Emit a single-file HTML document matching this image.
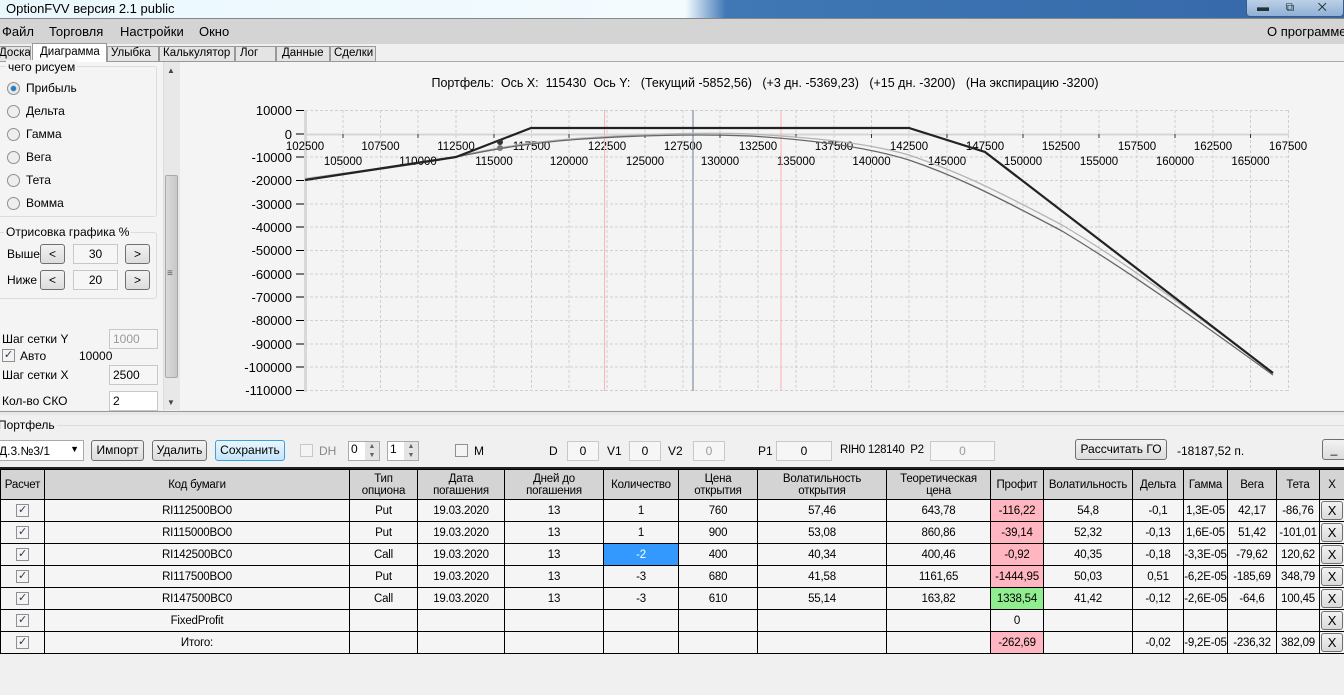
<!DOCTYPE html>
<html><head><meta charset="utf-8"><style>
*{box-sizing:border-box;margin:0;padding:0}
body{width:1344px;height:695px;overflow:hidden;background:#f0f0f0;font-family:"Liberation Sans",sans-serif;font-size:12px;color:#000;position:relative}
.a{position:absolute;white-space:nowrap}
.btn{position:absolute;border:1px solid #707070;border-radius:3px;background:linear-gradient(#f2f2f2,#dcdcdc);text-align:center;font-size:12px;line-height:18px;white-space:nowrap}
.box{position:absolute;border:1px solid #c8c8c8;background:#f6f6f6;text-align:center;font-size:12px}
.rad{position:absolute;width:13px;height:13px;border:1px solid #8e8f8f;border-radius:50%;background:#eee}
.cb{position:absolute;width:13px;height:13px;border:1px solid #8e8f8f;background:#f4f4f4;font-size:11px;line-height:11px;text-align:center;color:#335}
.tab{font-size:11.5px}
table{border-collapse:collapse;position:absolute;left:0;top:469px;width:1344px;table-layout:fixed;font-size:11.5px}
td{border:1px solid #000;text-align:center;height:22px;padding:0;background:#f5f5f5;overflow:hidden;white-space:nowrap;letter-spacing:-0.2px}
tr.h td{background:#d4d4d4;height:30px;line-height:12px}
.r{background:#ffb6c1!important}.g{background:#90ee90!important}
.x{display:inline-block;width:22px;height:19px;border:1px solid #707070;border-radius:3px;background:linear-gradient(#f2f2f2,#dadada);line-height:17px;font-size:13px}
</style></head><body>
<div class="a" style="left:0;top:0;width:1344px;height:18px;background:linear-gradient(90deg,#e9f8fd 0,#f4fbff 51%,#3f78b5 54%,#3567a8 100%)"></div>
<div class="a" style="left:6px;top:1px;font-size:13px">OptionFVV версия 2.1 public</div>
<div class="a" style="left:1246px;top:0;width:98px;height:17px;border:1px solid #3a5d87;border-top:none;border-radius:0 0 4px 4px;background:linear-gradient(#bcd0e6,#8fb0d6)"></div>
<div class="a" style="left:1257px;top:0;color:#233;font-size:12px">▬&nbsp;&nbsp;&nbsp;&nbsp;&nbsp;⧉&nbsp;&nbsp;&nbsp;&nbsp;&nbsp;&nbsp;&nbsp;✕</div>
<div class="a" style="left:0;top:18px;width:1344px;height:26px;background:#d4d4d4;border-top:1px solid #888"></div>
<div class="a" style="left:2px;top:24px;font-size:13px">Файл</div>
<div class="a" style="left:49px;top:24px;font-size:13px">Торговля</div>
<div class="a" style="left:120px;top:24px;font-size:13px">Настройки</div>
<div class="a" style="left:199px;top:24px;font-size:13px">Окно</div>
<div class="a" style="left:1267px;top:24px;font-size:13px">О программе</div>
<div class="a" style="left:0;top:61px;width:1344px;height:1px;background:#aaa"></div>
<div class="a tab" style="left:-8px;top:46px;width:39px;height:16px;border:1px solid #999;background:#e4e4e4;padding-left:6px;overflow:hidden">Доска</div>
<div class="a tab" style="left:32px;top:43px;width:75px;height:20px;border:1px solid #999;border-bottom:none;background:#fff;padding-left:7px;padding-top:2px">Диаграмма</div>
<div class="a tab" style="left:107px;top:46px;width:52px;height:16px;border:1px solid #999;background:#e4e4e4;padding-left:3px">Улыбка</div>
<div class="a tab" style="left:159px;top:46px;width:76px;height:16px;border:1px solid #999;background:#e4e4e4;padding-left:3px;overflow:hidden">Калькулятор</div>
<div class="a tab" style="left:235px;top:46px;width:41px;height:16px;border:1px solid #999;background:#e4e4e4;padding-left:4px">Лог</div>
<div class="a tab" style="left:276px;top:46px;width:54px;height:16px;border:1px solid #999;background:#e4e4e4;padding-left:5px">Данные</div>
<div class="a tab" style="left:330px;top:46px;width:46px;height:16px;border:1px solid #999;background:#e4e4e4;padding-left:3px">Сделки</div>
<div class="a" style="left:0;top:62px;width:163px;height:348px;background:#f4f4f4"></div>
<div class="a" style="left:-3px;top:66px;width:160px;height:151px;border:1px solid #dcdcdc;border-radius:3px"></div>
<div class="a" style="left:6px;top:60px;background:#f4f4f4;padding:0 2px">чего рисуем</div>
<div class="rad" style="left:7px;top:82px;background:radial-gradient(#2a7fc0 30%,#e8e8e8 40%)"></div><div class="a" style="left:26px;top:81px">Прибыль</div>
<div class="rad" style="left:7px;top:105px"></div><div class="a" style="left:26px;top:104px">Дельта</div>
<div class="rad" style="left:7px;top:128px"></div><div class="a" style="left:26px;top:127px">Гамма</div>
<div class="rad" style="left:7px;top:151px"></div><div class="a" style="left:26px;top:150px">Вега</div>
<div class="rad" style="left:7px;top:174px"></div><div class="a" style="left:26px;top:173px">Тета</div>
<div class="rad" style="left:7px;top:197px"></div><div class="a" style="left:26px;top:196px">Вомма</div>
<div class="a" style="left:-3px;top:232px;width:160px;height:67px;border:1px solid #dcdcdc;border-radius:3px"></div>
<div class="a" style="left:4px;top:225px;background:#f4f4f4;padding:0 2px">Отрисовка графика %</div>
<div class="a" style="left:7px;top:247px">Выше</div>
<div class="btn" style="left:40px;top:244px;width:25px;height:20px">&lt;</div>
<div class="box" style="left:73px;top:244px;width:45px;height:20px;line-height:18px">30</div>
<div class="btn" style="left:125px;top:244px;width:25px;height:20px">&gt;</div>
<div class="a" style="left:7px;top:273px">Ниже</div>
<div class="btn" style="left:40px;top:270px;width:25px;height:20px">&lt;</div>
<div class="box" style="left:73px;top:270px;width:45px;height:20px;line-height:18px">20</div>
<div class="btn" style="left:125px;top:270px;width:25px;height:20px">&gt;</div>
<div class="a" style="left:2px;top:332px">Шаг сетки Y</div>
<div class="box" style="left:109px;top:329px;width:49px;height:20px;line-height:18px;text-align:left;padding-left:3px;color:#999">1000</div>
<div class="cb" style="left:2px;top:349px">✓</div><div class="a" style="left:20px;top:349px">Авто</div><div class="a" style="left:79px;top:349px">10000</div>
<div class="a" style="left:2px;top:368px">Шаг сетки X</div>
<div class="box" style="left:109px;top:365px;width:49px;height:20px;line-height:18px;text-align:left;padding-left:3px">2500</div>
<div class="a" style="left:2px;top:394px">Кол-во СКО</div>
<div class="box" style="left:109px;top:391px;width:49px;height:20px;line-height:18px;text-align:left;padding-left:3px;background:#fff">2</div>
<div class="a" style="left:163px;top:62px;width:17px;height:348px;background:#e8e8e8;border-left:1px solid #ddd"></div>
<div class="a" style="left:165px;top:175px;width:13px;height:203px;background:linear-gradient(90deg,#dadada,#c8c8c8);border:1px solid #aaa;border-radius:2px"></div>
<div class="a" style="left:167px;top:268px;font-size:10px;color:#555">≡</div>
<div class="a" style="left:167px;top:66px;font-size:8px;color:#444">▲</div>
<div class="a" style="left:167px;top:398px;font-size:8px;color:#444">▼</div>
<div class="a" style="left:180px;top:62px;width:1164px;height:348px;background:#f4f4f4"></div>
<div class="a" style="left:180px;top:76px;width:1164px;text-align:center;font-size:12.5px;padding-left:6px">Портфель:&nbsp; Ось X:&nbsp; 115430&nbsp; Ось Y:&nbsp;&nbsp; (Текущий -5852,56)&nbsp;&nbsp; (+3 дн. -5369,23)&nbsp;&nbsp; (+15 дн. -3200)&nbsp;&nbsp; (На экспирацию -3200)</div>
<svg class="a" style="left:0;top:0" width="1344" height="420" font-family="Liberation Sans" font-size="12">
<g stroke="#cfcfcf" stroke-dasharray="3,2" stroke-width="1">
<path d="M305 110.5H1289M305 134H1289M305 157H1289M305 180.5H1289M305 204H1289M305 227H1289M305 250.5H1289M305 274H1289M305 297H1289M305 320.5H1289M305 344H1289M305 367H1289M305 390.5H1289"/>
<path d="M343 110V391M380.5 110V391M418 110V391M456 110V391M494 110V391M531.5 110V391M569 110V391M607 110V391M645 110V391M683 110V391M720 110V391M758 110V391M796 110V391M834 110V391M871.5 110V391M909 110V391M947 110V391M985 110V391M1023 110V391M1061 110V391M1099 110V391M1137 110V391M1175 110V391M1213 110V391M1250.5 110V391M1288.5 110V391"/>
</g>
<path d="M305.5 110V392" stroke="#d8d8d8" stroke-width="3"/>
<path d="M305 134.5H1289" stroke="#d6d6d6" stroke-width="2"/>
<g stroke="#000"><path d="M296 110.5h8M296 134h8M296 157h8M296 180.5h8M296 204h8M296 227h8M296 250.5h8M296 274h8M296 297h8M296 320.5h8M296 344h8M296 367h8M296 390.5h8"/></g>
<g stroke="#333"><path d="M343 134v4M418 134v4M494 134v4M569 134v4M645 134v4M720 134v4M796 134v4M871.5 134v4M947 134v4M1023 134v4M1099 134v4M1175 134v4M1250.5 134v4"/></g>
<g text-anchor="end" font-size="13">
<text x="292" y="115">10000</text><text x="292" y="139">0</text><text x="292" y="162">-10000</text><text x="292" y="185">-20000</text><text x="292" y="209">-30000</text><text x="292" y="232">-40000</text><text x="292" y="255">-50000</text><text x="292" y="279">-60000</text><text x="292" y="302">-70000</text><text x="292" y="325">-80000</text><text x="292" y="349">-90000</text><text x="292" y="372">-100000</text><text x="292" y="395">-110000</text>
</g>
<g text-anchor="middle" font-size="11.5">
<text x="305" y="150">102500</text><text x="380.5" y="150">107500</text><text x="456" y="150">112500</text><text x="531.5" y="150">117500</text><text x="607" y="150">122500</text><text x="683" y="150">127500</text><text x="758" y="150">132500</text><text x="834" y="150">137500</text><text x="909" y="150">142500</text><text x="985" y="150">147500</text><text x="1061" y="150">152500</text><text x="1137" y="150">157500</text><text x="1213" y="150">162500</text><text x="1288" y="150">167500</text>
<text x="343" y="165">105000</text><text x="418" y="165">110000</text><text x="494" y="165">115000</text><text x="569" y="165">120000</text><text x="645" y="165">125000</text><text x="720" y="165">130000</text><text x="796" y="165">135000</text><text x="871.5" y="165">140000</text><text x="947" y="165">145000</text><text x="1023" y="165">150000</text><text x="1099" y="165">155000</text><text x="1175" y="165">160000</text><text x="1250.5" y="165">165000</text>
</g>
<path d="M604.5 110V391M781 110V391" stroke="#ffb0b8" stroke-width="1"/>
<path d="M693 110V391" stroke="#8a98aa" stroke-width="1.3"/>
<path d="M305 178.5C360 171 420 163 456 156.5C500 147 540 140 600 137C650 134 700 132 750 134C800 137 860 141 909 155C950 169 985 184 1062 225C1130 265 1200 318 1273 373" fill="none" stroke="#b4b4b4" stroke-width="1.3"/>
<path d="M305 180C360 172 420 164 456 157C500 148 540 141 600 138C650 135 700 134 750 136C800 139 860 145 909 160C950 174 985 190 1062 231C1130 272 1200 322 1273 375" fill="none" stroke="#666" stroke-width="1.3"/>
<path d="M305 180L456 157L531 128H909L985 152L1273 373" fill="none" stroke="#222" stroke-width="2.2"/>
<circle cx="500" cy="142" r="3" fill="#333"/><circle cx="500" cy="148" r="3" fill="#777"/>
</svg>
<div class="a" style="left:0;top:411px;width:1344px;height:4px;border-top:1px solid #999;background:#e8e8e8"></div>
<div class="a" style="left:-3px;top:425px;width:1350px;height:46px;border:1px solid #dcdcdc;border-radius:3px"></div>
<div class="a" style="left:-4px;top:418px;background:#f0f0f0;padding:0 2px">Портфель</div>
<div class="a" style="left:-2px;top:440px;width:86px;height:21px;border:1px solid #aaa;background:#fff;padding:3px 0 0 0">Д.3.№3/1<span style="position:absolute;right:4px;top:3px;font-size:9px">▼</span></div>
<div class="btn" style="left:91px;top:440px;width:53px;height:21px">Импорт</div>
<div class="btn" style="left:152px;top:440px;width:55px;height:21px">Удалить</div>
<div class="btn" style="left:215px;top:440px;width:70px;height:21px;border-color:#3c9fe0;background:linear-gradient(#e9f6fd,#c4e5f8)">Сохранить</div>
<div class="cb" style="left:300px;top:444px;border-color:#c8c8c8"></div><div class="a" style="left:319px;top:444px;color:#888">DH</div>
<div class="box" style="left:348px;top:441px;width:32px;height:20px;text-align:left;padding-left:2px;background:#fff;border-color:#aaa">0</div><div class="a" style="left:365px;top:442px;width:14px;height:18px;background:#e4e4e4;font-size:7px;line-height:9px;text-align:center;color:#567">▲<br>▼</div>
<div class="box" style="left:387px;top:441px;width:32px;height:20px;text-align:left;padding-left:2px;background:#fff;border-color:#aaa">1</div><div class="a" style="left:404px;top:442px;width:14px;height:18px;background:#e4e4e4;font-size:7px;line-height:9px;text-align:center;color:#567">▲<br>▼</div>
<div class="cb" style="left:455px;top:444px"></div><div class="a" style="left:474px;top:444px">M</div>
<div class="a" style="left:549px;top:444px">D</div><div class="box" style="left:567px;top:441px;width:32px;height:20px;line-height:18px">0</div>
<div class="a" style="left:607px;top:444px">V1</div><div class="box" style="left:629px;top:441px;width:32px;height:20px;line-height:18px">0</div>
<div class="a" style="left:668px;top:444px">V2</div><div class="box" style="left:693px;top:441px;width:32px;height:20px;line-height:18px;color:#999">0</div>
<div class="a" style="left:758px;top:444px">P1</div><div class="box" style="left:776px;top:441px;width:56px;height:20px;line-height:18px">0</div>
<div class="a" style="left:840px;top:444px;font-size:11.5px;letter-spacing:-0.3px">RIH0 128140&nbsp; P2</div><div class="box" style="left:930px;top:441px;width:65px;height:20px;line-height:18px;color:#999">0</div>
<div class="btn" style="left:1075px;top:439px;width:92px;height:21px">Рассчитать ГО</div>
<div class="a" style="left:1177px;top:444px">-18187,52 п.</div>
<div class="btn" style="left:1322px;top:439px;width:24px;height:21px">_</div>
<div class="a" style="left:0;top:467px;width:1344px;height:2px;background:#222"></div>
<table>
<colgroup><col style="width:44px"><col style="width:305px"><col style="width:68px"><col style="width:87px"><col style="width:99px"><col style="width:75px"><col style="width:79px"><col style="width:129px"><col style="width:104px"><col style="width:53px"><col style="width:89px"><col style="width:51px"><col style="width:44px"><col style="width:49px"><col style="width:43px"><col style="width:25px"></colgroup>
<tr class="h"><td>Расчет</td><td>Код бумаги</td><td>Тип<br>опциона</td><td>Дата<br>погашения</td><td>Дней до<br>погашения</td><td>Количество</td><td>Цена<br>открытия</td><td>Волатильность<br>открытия</td><td>Теоретическая<br>цена</td><td>Профит</td><td>Волатильность</td><td>Дельта</td><td>Гамма</td><td>Вега</td><td>Тета</td><td>X</td></tr>
<tr><td><span class="cb" style="position:static;display:inline-block">✓</span></td><td>RI112500BO0</td><td>Put</td><td>19.03.2020</td><td>13</td><td>1</td><td>760</td><td>57,46</td><td>643,78</td><td class="r">-116,22</td><td>54,8</td><td>-0,1</td><td>1,3E-05</td><td>42,17</td><td>-86,76</td><td><span class="x">X</span></td></tr>
<tr><td><span class="cb" style="position:static;display:inline-block">✓</span></td><td>RI115000BO0</td><td>Put</td><td>19.03.2020</td><td>13</td><td>1</td><td>900</td><td>53,08</td><td>860,86</td><td class="r">-39,14</td><td>52,32</td><td>-0,13</td><td>1,6E-05</td><td>51,42</td><td>-101,01</td><td><span class="x">X</span></td></tr>
<tr><td><span class="cb" style="position:static;display:inline-block">✓</span></td><td>RI142500BC0</td><td>Call</td><td>19.03.2020</td><td>13</td><td style="background:#3399ff;color:#fff">-2</td><td>400</td><td>40,34</td><td>400,46</td><td class="r">-0,92</td><td>40,35</td><td>-0,18</td><td>-3,3E-05</td><td>-79,62</td><td>120,62</td><td><span class="x">X</span></td></tr>
<tr><td><span class="cb" style="position:static;display:inline-block">✓</span></td><td>RI117500BO0</td><td>Put</td><td>19.03.2020</td><td>13</td><td>-3</td><td>680</td><td>41,58</td><td>1161,65</td><td class="r">-1444,95</td><td>50,03</td><td>0,51</td><td>-6,2E-05</td><td>-185,69</td><td>348,79</td><td><span class="x">X</span></td></tr>
<tr><td><span class="cb" style="position:static;display:inline-block">✓</span></td><td>RI147500BC0</td><td>Call</td><td>19.03.2020</td><td>13</td><td>-3</td><td>610</td><td>55,14</td><td>163,82</td><td class="g">1338,54</td><td>41,42</td><td>-0,12</td><td>-2,6E-05</td><td>-64,6</td><td>100,45</td><td><span class="x">X</span></td></tr>
<tr><td><span class="cb" style="position:static;display:inline-block">✓</span></td><td>FixedProfit</td><td></td><td></td><td></td><td></td><td></td><td></td><td></td><td>0</td><td></td><td></td><td></td><td></td><td></td><td><span class="x">X</span></td></tr>
<tr><td><span class="cb" style="position:static;display:inline-block">✓</span></td><td>Итого:</td><td></td><td></td><td></td><td></td><td></td><td></td><td></td><td class="r">-262,69</td><td></td><td>-0,02</td><td>-9,2E-05</td><td>-236,32</td><td>382,09</td><td><span class="x">X</span></td></tr>
</table>
</body></html>
